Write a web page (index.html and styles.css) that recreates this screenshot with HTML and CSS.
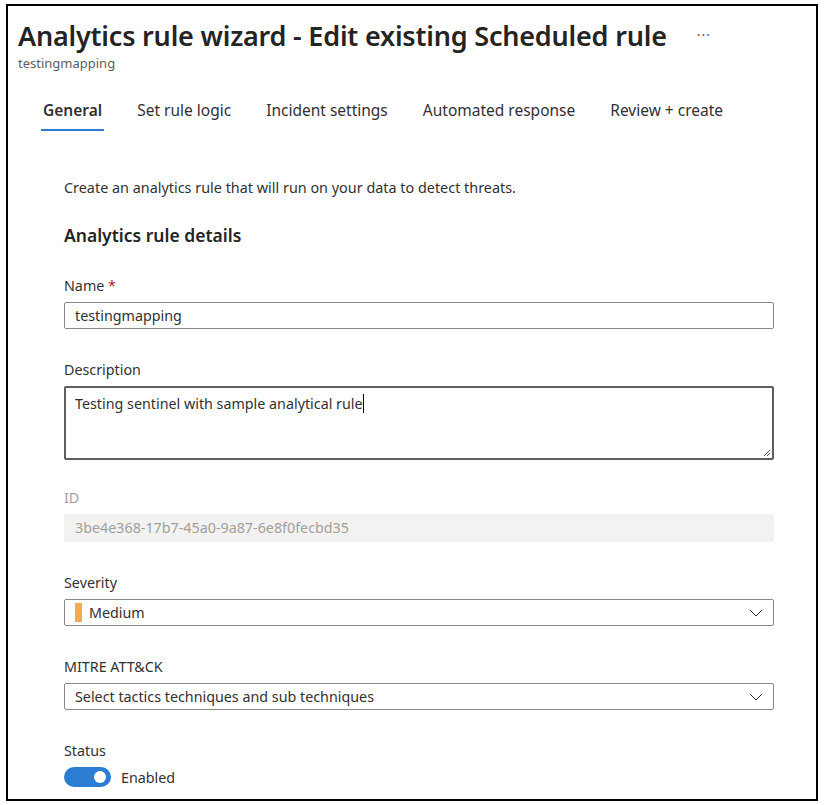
FILE: index.html
```html
<!DOCTYPE html>
<html lang="en">
<head>
<meta charset="utf-8">
<title>Analytics rule wizard</title>
<link rel="stylesheet" href="styles.css">
</head>
<body>
<div class="frame">
  <header class="header">
    <div class="title-row">
      <h1 class="title">Analytics rule wizard - Edit existing Scheduled rule</h1>
      <span class="more">&middot;&middot;&middot;</span>
    </div>
    <div class="subtitle">testingmapping</div>
  </header>
  <nav class="tabs">
    <span class="tab active">General</span>
    <span class="tab">Set rule logic</span>
    <span class="tab">Incident settings</span>
    <span class="tab">Automated response</span>
    <span class="tab">Review + create</span>
  </nav>
  <main class="content">
    <p class="intro">Create an analytics rule that will run on your data to detect threats.</p>
    <h2 class="section">Analytics rule details</h2>

    <div class="field first">
      <label class="label">Name <span class="req">*</span></label>
      <div class="input">testingmapping</div>
    </div>

    <div class="field">
      <label class="label">Description</label>
      <div class="textarea">Testing sentinel with sample analytical rul<span class="caret">e</span>
        <svg class="grip" width="9" height="9" viewBox="0 0 9 9"><path d="M8 2 L2 8 M8 5 L5 8" stroke="#555" stroke-width="1" fill="none"/></svg>
      </div>
    </div>

    <div class="field tight">
      <label class="label disabled">ID</label>
      <div class="input readonly">3be4e368-17b7-45a0-9a87-6e8f0fecbd35</div>
    </div>

    <div class="field">
      <label class="label">Severity</label>
      <div class="input select">
        <span class="sev-bar"></span>
        <span class="select-text">Medium</span>
        <svg class="chev" width="14" height="8" viewBox="0 0 14 8"><path d="M1 1 L7 7 L13 1" stroke="#323130" stroke-width="1" fill="none"/></svg>
      </div>
    </div>

    <div class="field">
      <label class="label">MITRE ATT&amp;CK</label>
      <div class="input select">
        <span class="select-text">Select tactics techniques and sub techniques</span>
        <svg class="chev" width="14" height="8" viewBox="0 0 14 8"><path d="M1 1 L7 7 L13 1" stroke="#323130" stroke-width="1" fill="none"/></svg>
      </div>
    </div>

    <div class="field">
      <label class="label">Status</label>
      <div class="toggle-row">
        <span class="toggle"><span class="knob"></span></span>
        <span class="toggle-text">Enabled</span>
      </div>
    </div>
  </main>
</div>
</body>
</html>
```

FILE: styles.css
```css
html, body {
  margin: 0;
  padding: 0;
  background: #ffffff;
}
body {
  font-family: "Noto Sans", "Open Sans", sans-serif;
  color: #323130;
  padding: 4px 0 0 6px;
}
.frame {
  width: 812px;
  height: 797px;
  border: 2px solid #000;
  box-sizing: border-box;
  overflow: hidden;
}
.header {
  padding: 12px 0 0 10px;
}
.title-row {
  display: flex;
  align-items: center;
}
.title {
  margin: 0;
  font-size: 27px;
  font-weight: 600;
  line-height: 36px;
  color: #252423;
  letter-spacing: -0.2px;
}
.more {
  margin-left: 30px;
  font-size: 14px;
  color: #605e5c;
  letter-spacing: 1px;
  position: relative;
  top: -2px;
}
.subtitle {
  font-size: 13px;
  line-height: 18px;
  color: #605e5c;
}
.tabs {
  display: flex;
  gap: 31px;
  padding: 27px 0 0 33px;
}
.tab {
  font-size: 15.5px;
  line-height: 22px;
  color: #323130;
  padding: 0 2px 8px;
  border-bottom: 2px solid transparent;
}
.tab.active {
  font-weight: 600;
  border-bottom-color: #2b7cd3;
}
.content {
  padding-left: 56px;
  padding-top: 47px;
  width: 710px;
}
.intro {
  margin: 0;
  font-size: 14.4px;
  line-height: 20px;
}
.section {
  margin: 25px 0 0;
  font-size: 17.5px;
  line-height: 24px;
  font-weight: 600;
  color: #252423;
}
.field {
  margin-top: 30px;
}
.field.first {
  margin-top: 28px;
}
.field.tight {
  margin-top: 27px;
}
.label {
  display: block;
  font-size: 14.3px;
  line-height: 22px;
  margin-bottom: 5px;
}
.label.disabled {
  color: #a19f9d;
}
.req {
  color: #a4262c;
}
.input {
  height: 27px;
  border: 1px solid #8a8886;
  border-radius: 2px;
  box-sizing: border-box;
  padding: 0 10px;
  font-size: 14.3px;
  line-height: 24px;
  display: flex;
  align-items: center;
}
.input.readonly {
  background: #f3f2f1;
  border-color: #f3f2f1;
  color: #a19f9d;
  height: 28px;
}
.textarea {
  position: relative;
  height: 74px;
  border: 2px solid #605e5c;
  border-radius: 2px;
  box-sizing: border-box;
  padding: 6px 9px;
  font-size: 14.3px;
  line-height: 20px;
}
.caret {
  border-right: 1px solid #000;
}
.grip {
  position: absolute;
  right: 1px;
  bottom: 1px;
}
.select-text {
  flex: 1;
}
.sev-bar {
  width: 7px;
  height: 19px;
  background: #f7a94e;
  margin-right: 7px;
}
.toggle-row {
  display: flex;
  align-items: center;
  gap: 10px;
}
.toggle {
  width: 47px;
  height: 20px;
  border-radius: 10px;
  background: #2b7cd3;
  position: relative;
  display: inline-block;
}
.knob {
  position: absolute;
  right: 5px;
  top: 4px;
  width: 12px;
  height: 12px;
  border-radius: 50%;
  background: #fff;
}
.toggle-text {
  font-size: 14.3px;
}
```
